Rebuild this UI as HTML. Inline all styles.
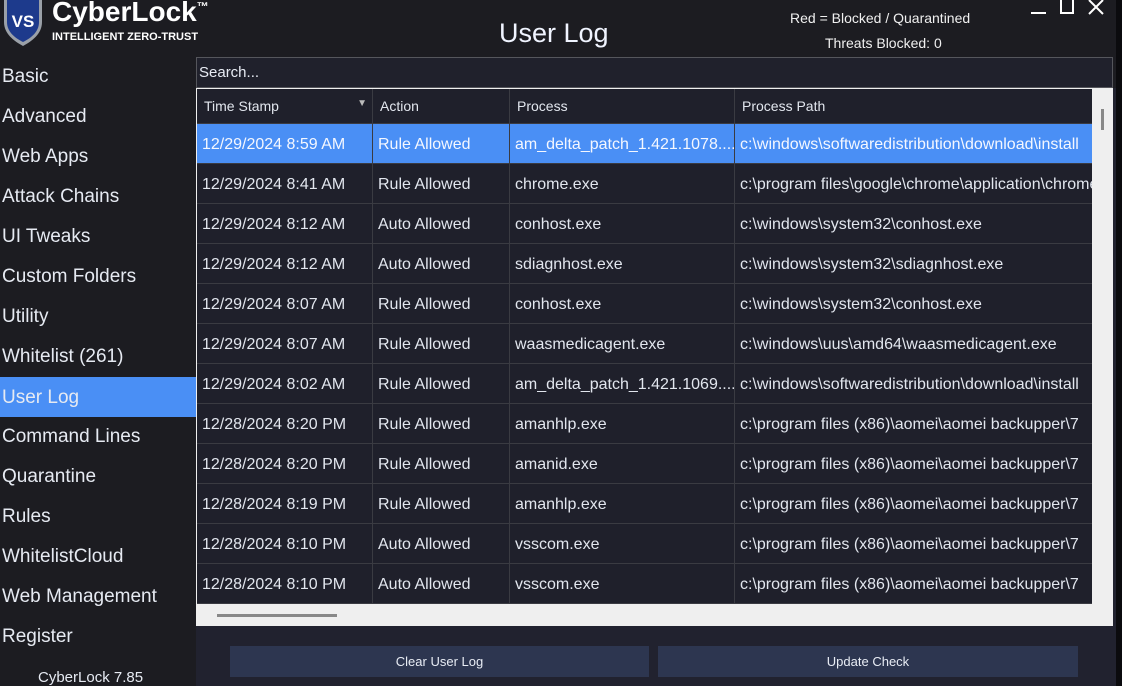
<!DOCTYPE html>
<html><head><meta charset="utf-8"><style>
*{margin:0;padding:0;box-sizing:border-box}
body{width:1122px;height:686px;overflow:hidden;background:#1c1c21;font-family:"Liberation Sans",sans-serif;color:#e8ecf4;position:relative}
.abs{position:absolute}
.nav{position:absolute;left:0;width:196px;height:40px;line-height:42px;padding-left:2px;font-size:19px;color:#e6eaf2}
.nav.sel{background:#4a8ff5}
table{border-collapse:collapse;table-layout:fixed}
td{height:40px;border:1px solid #3a3b42;font-size:16px;padding-left:5px;padding-top:2px;white-space:nowrap;overflow:hidden;color:#e2e6ee}
tr.sel td{background:#4a8ff5;color:#f4f7ff}
th{height:35px;border:1px solid #3a3b42;font-size:14px;font-weight:normal;text-align:left;padding-left:7px;color:#e2e6ee}
.btn{position:absolute;top:646px;height:31px;background:#2d3650;color:#e8ecf4;font-size:13px;text-align:center;line-height:32px}
</style></head><body>
<svg class="abs" style="left:2px;top:0" width="42" height="46" viewBox="0 0 42 46"><path d="M2 0 H40 V22 C40 34 30 41 21 46 C12 41 2 34 2 22 Z" fill="#9aa0a8"/><path d="M5 0 H37 V22 C37 32 29 38 21 42 C13 38 5 32 5 22 Z" fill="#1d3a8c"/><text x="21" y="27" font-family="Liberation Sans" font-weight="bold" font-size="17" fill="#fff" text-anchor="middle">VS</text></svg>
<div class="abs" style="left:52px;top:-4px;font-size:28px;font-weight:bold;color:#fff">CyberLock<sup style="font-size:12px">™</sup></div>
<div class="abs" style="left:52px;top:31px;font-size:11px;font-weight:bold;color:#fff">INTELLIGENT ZERO-TRUST</div>
<div class="abs" style="left:499px;top:18px;font-size:27px;color:#f0f4ff">User Log</div>
<div class="abs" style="left:790px;top:10px;font-size:14px;color:#f0f0f0">Red = Blocked / Quarantined</div>
<div class="abs" style="left:825px;top:35px;font-size:14px;color:#f0f0f0">Threats Blocked: 0</div>
<div class="abs" style="left:1031px;top:12px;width:15px;height:2px;background:#fff"></div>
<div class="abs" style="left:1060px;top:0;width:14px;height:14px;border:2px solid #fff;border-top:none"></div>
<svg class="abs" style="left:1088px;top:0" width="16" height="15"><path d="M1 0 L15 14 M15 0 L1 14" stroke="#fff" stroke-width="2"/></svg>
<div class="abs" style="left:1116px;top:0;width:6px;height:686px;background:#0b0b0e"></div>

<div class="nav" style="top:56px">Basic</div>
<div class="nav" style="top:96px">Advanced</div>
<div class="nav" style="top:136px">Web Apps</div>
<div class="nav" style="top:176px">Attack Chains</div>
<div class="nav" style="top:216px">UI Tweaks</div>
<div class="nav" style="top:256px">Custom Folders</div>
<div class="nav" style="top:296px">Utility</div>
<div class="nav" style="top:336px">Whitelist (261)</div>
<div class="nav sel" style="top:377px">User Log</div>
<div class="nav" style="top:416px">Command Lines</div>
<div class="nav" style="top:456px">Quarantine</div>
<div class="nav" style="top:496px">Rules</div>
<div class="nav" style="top:536px">WhitelistCloud</div>
<div class="nav" style="top:576px">Web Management</div>
<div class="nav" style="top:616px">Register</div>
<div class="abs" style="left:38px;top:669px;font-size:15px;color:#e6eaf2">CyberLock 7.85</div>

<div class="abs" style="left:196px;top:57px;width:917px;height:31px;background:#20212c;border:1px solid #55565c;font-size:15px;padding:6px 0 0 2px">Search...</div>
<div class="abs" style="left:196px;top:88px;width:920px;height:598px;background:#21222f"></div>
<div class="abs" style="left:196px;top:88px;width:917px;height:538px;background:#efefef"></div>
<div class="abs" style="left:197px;top:89px;width:895px;height:515px;background:#1f202b;overflow:hidden">
<table style="width:920px;margin-left:-1px;margin-top:-1px">
<colgroup><col style="width:176px"><col style="width:137px"><col style="width:225px"><col style="width:382px"></colgroup>
<tr><th>Time Stamp<span style="float:right;margin-right:5px;font-size:10px;color:#bbb">▼</span></th><th>Action</th><th>Process</th><th>Process Path</th></tr>
<tr class="sel"><td>12/29/2024 8:59 AM</td><td>Rule Allowed</td><td>am_delta_patch_1.421.1078....</td><td>c:\windows\softwaredistribution\download\install</td></tr>
<tr><td>12/29/2024 8:41 AM</td><td>Rule Allowed</td><td>chrome.exe</td><td>c:\program files\google\chrome\application\chrome</td></tr>
<tr><td>12/29/2024 8:12 AM</td><td>Auto Allowed</td><td>conhost.exe</td><td>c:\windows\system32\conhost.exe</td></tr>
<tr><td>12/29/2024 8:12 AM</td><td>Auto Allowed</td><td>sdiagnhost.exe</td><td>c:\windows\system32\sdiagnhost.exe</td></tr>
<tr><td>12/29/2024 8:07 AM</td><td>Rule Allowed</td><td>conhost.exe</td><td>c:\windows\system32\conhost.exe</td></tr>
<tr><td>12/29/2024 8:07 AM</td><td>Rule Allowed</td><td>waasmedicagent.exe</td><td>c:\windows\uus\amd64\waasmedicagent.exe</td></tr>
<tr><td>12/29/2024 8:02 AM</td><td>Rule Allowed</td><td>am_delta_patch_1.421.1069....</td><td>c:\windows\softwaredistribution\download\install</td></tr>
<tr><td>12/28/2024 8:20 PM</td><td>Rule Allowed</td><td>amanhlp.exe</td><td>c:\program files (x86)\aomei\aomei backupper\7</td></tr>
<tr><td>12/28/2024 8:20 PM</td><td>Rule Allowed</td><td>amanid.exe</td><td>c:\program files (x86)\aomei\aomei backupper\7</td></tr>
<tr><td>12/28/2024 8:19 PM</td><td>Rule Allowed</td><td>amanhlp.exe</td><td>c:\program files (x86)\aomei\aomei backupper\7</td></tr>
<tr><td>12/28/2024 8:10 PM</td><td>Auto Allowed</td><td>vsscom.exe</td><td>c:\program files (x86)\aomei\aomei backupper\7</td></tr>
<tr><td>12/28/2024 8:10 PM</td><td>Auto Allowed</td><td>vsscom.exe</td><td>c:\program files (x86)\aomei\aomei backupper\7</td></tr>
</table></div>
<div class="abs" style="left:1101px;top:109px;width:3px;height:21px;background:#888"></div>
<div class="abs" style="left:217px;top:614px;width:120px;height:3px;background:#888"></div>
<div class="btn" style="left:230px;width:419px">Clear User Log</div>
<div class="btn" style="left:658px;width:420px">Update Check</div>
</body></html>
